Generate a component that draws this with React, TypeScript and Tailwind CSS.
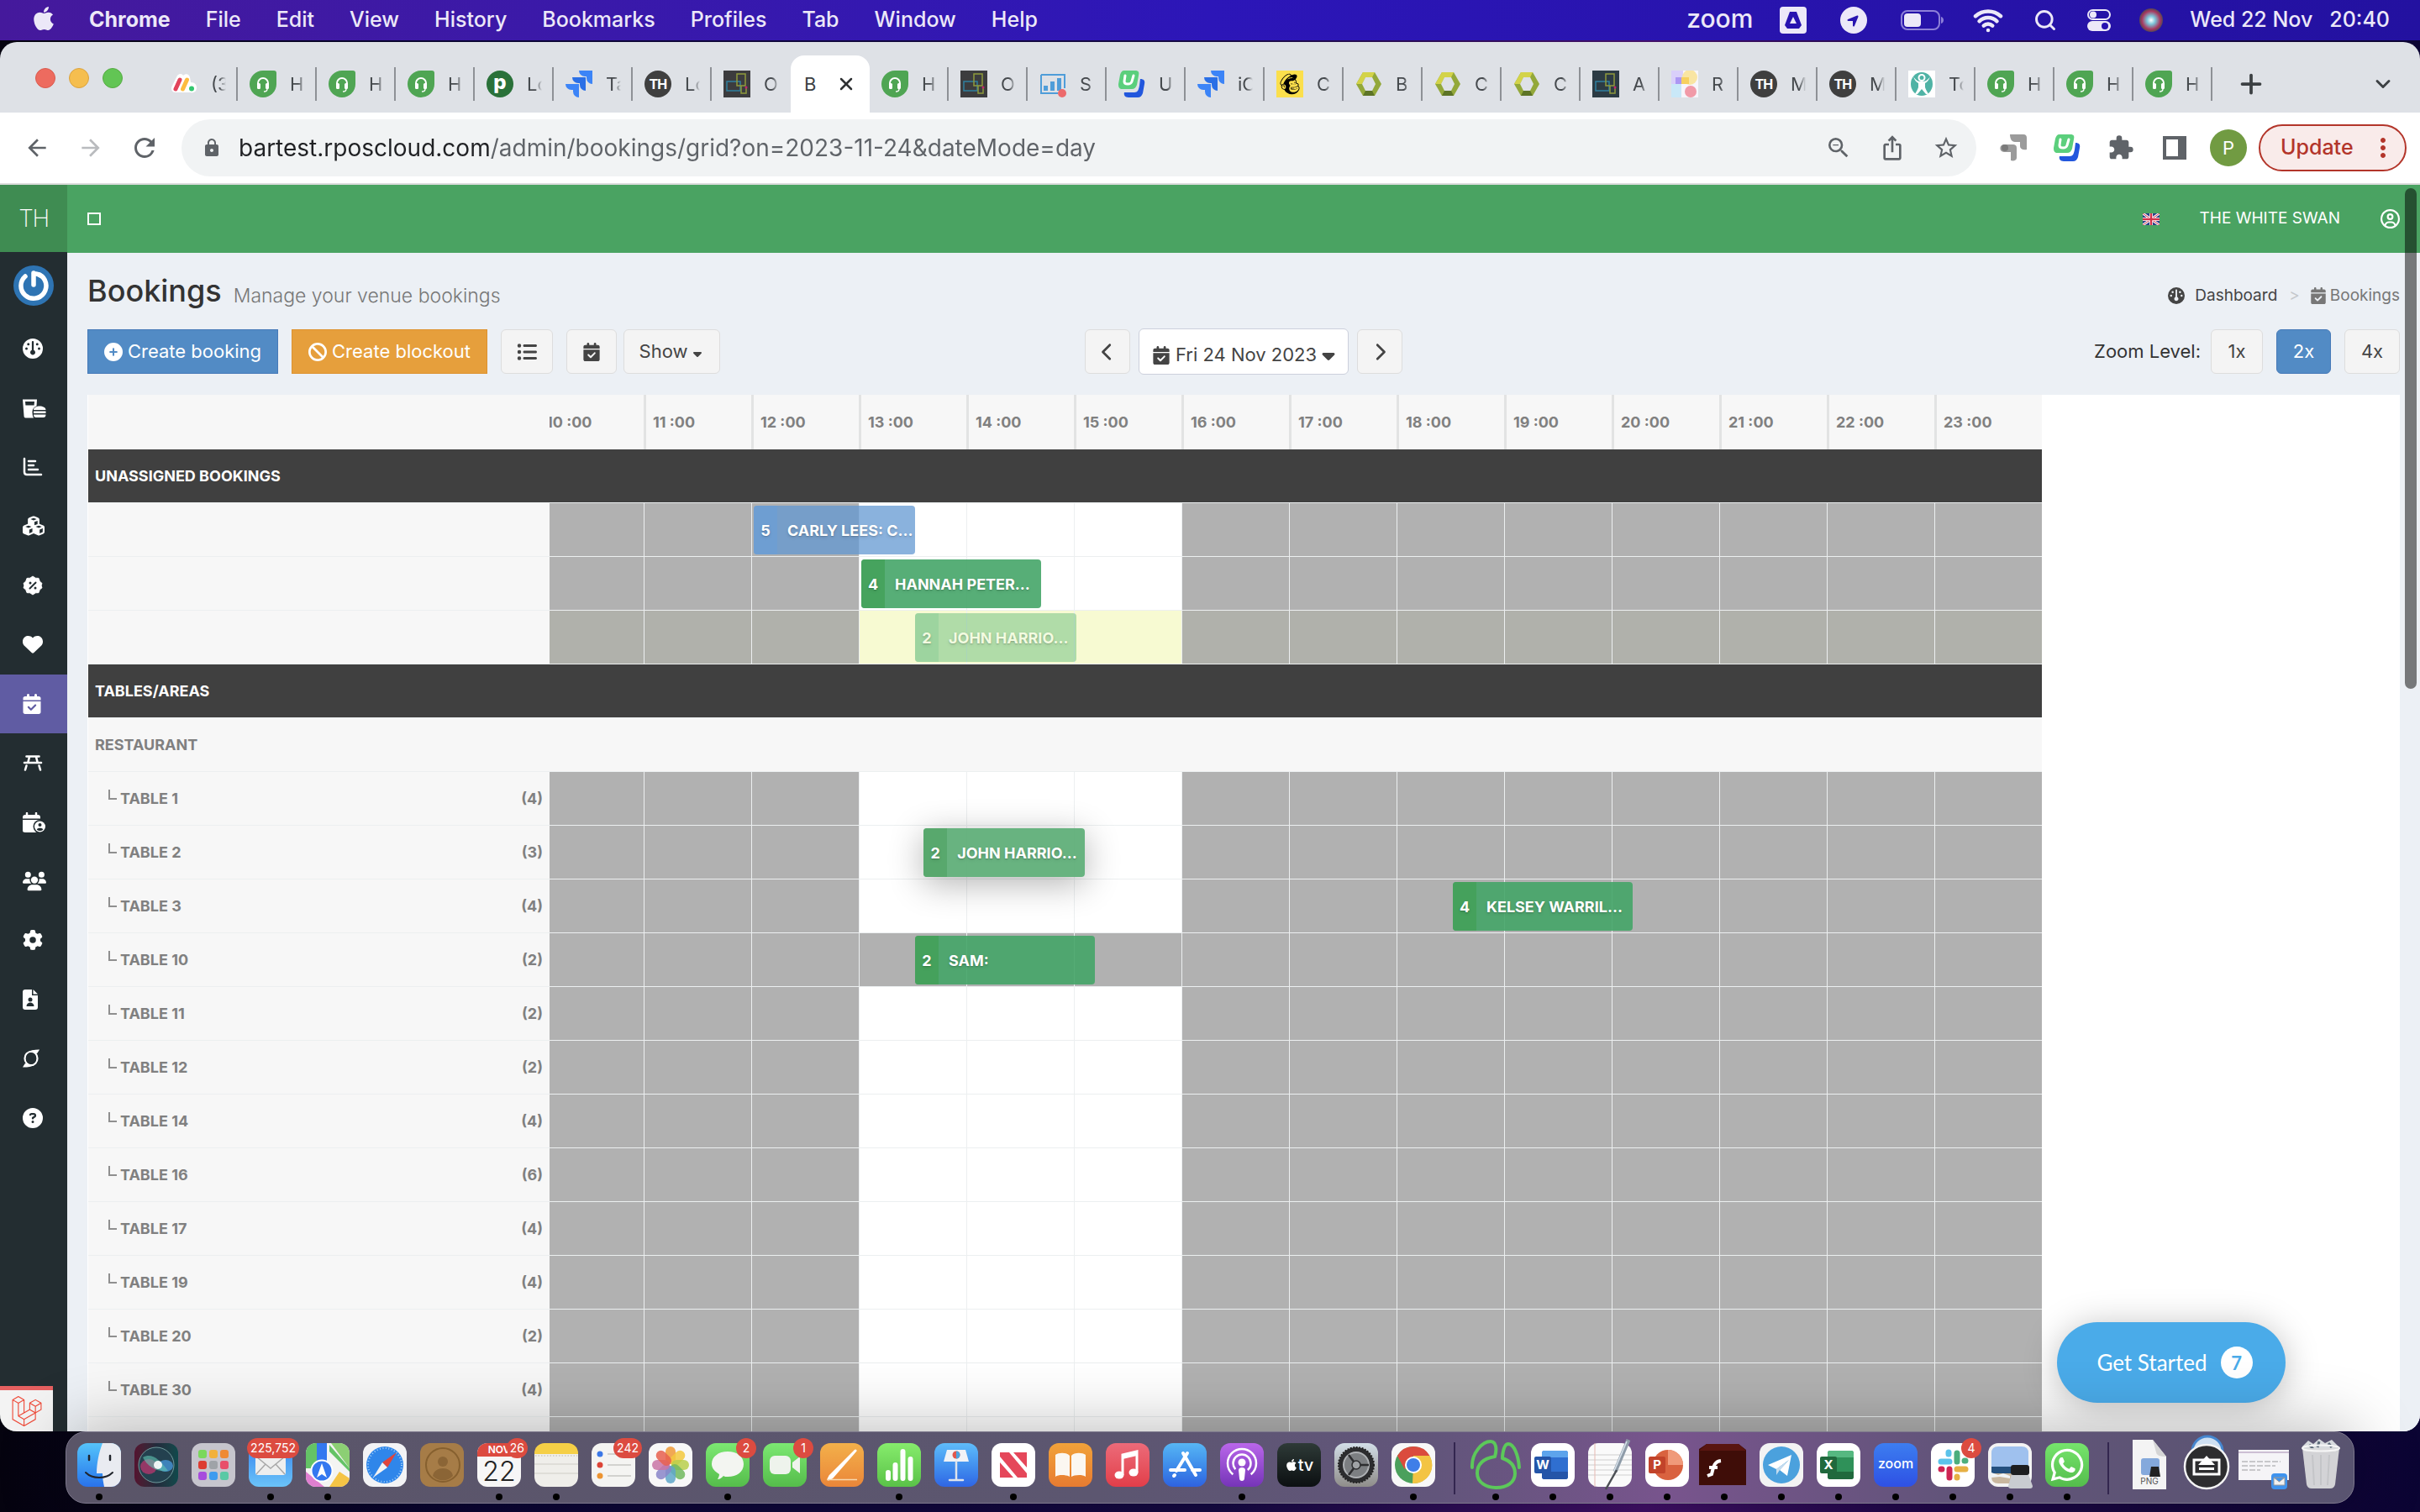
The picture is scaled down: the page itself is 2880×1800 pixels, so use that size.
import type { ReactNode } from 'react'
import {
  FaApple,
  FaBan,
  FaCalendarCheck,
  FaCaretDown,
  FaChevronLeft,
  FaChevronRight,
  FaCirclePlus,
  FaCircleQuestion,
  FaCubes,
  FaGauge,
  FaGear,
  FaHeart,
  FaLaravel,
  FaListUl,
  FaLocationArrow,
  FaMailchimp,
  FaRegCircleUser,
  FaUsers,
  FaWhatsapp,
} from 'react-icons/fa6'
import {
  MdArrowBack,
  MdArrowForward,
  MdExtension,
  MdIosShare,
  MdLock,
  MdMoreVert,
  MdRefresh,
  MdStarBorder,
  MdZoomOut,
} from 'react-icons/md'
import { ChevronDown, Plus, Search, Wifi, X } from 'lucide-react'

const HOUR_WIDTH = 128
const HOURS = [11, 12, 13, 14, 15, 16, 17, 18, 19, 20, 21, 22, 23]
const MENUS = ['File', 'Edit', 'View', 'History', 'Bookmarks', 'Profiles', 'Tab', 'Window', 'Help']

/* ---------- tab favicons ---------- */

function HelpdeskIcon() {
  return (
    <svg viewBox="0 0 32 32" className="size-8">
      <path d="M16 0h13a3 3 0 0 1 3 3v13A16 16 0 1 1 16 0z" fill="#4fa553" />
      <path d="M10 18v-3a6 6 0 0 1 12 0v3" fill="none" stroke="#fff" strokeWidth="2" />
      <rect x="9" y="15" width="4" height="7" rx="1.5" fill="#fff" />
      <rect x="19" y="15" width="4" height="7" rx="1.5" fill="#fff" />
      <path d="M21 22c0 2-2 3-4 3" fill="none" stroke="#fff" strokeWidth="1.4" />
    </svg>
  )
}

function MondayIcon() {
  return (
    <svg viewBox="0 0 32 32" className="size-8">
      <path d="M8 6c3-3 6-2 7 0 3-3 7-2 8 2l1 6c5 0 7 3 7 6 0 5-3 7-8 6H6c-5 0-6-5-4-8z" fill="#fff" />
      <path d="M6 22l5-11" stroke="#e2445c" strokeWidth="5" strokeLinecap="round" />
      <path d="M14.500 22l5-11" stroke="#fdbc3f" strokeWidth="5" strokeLinecap="round" />
      <circle cx="25" cy="21.500" r="3" fill="#33c76f" />
    </svg>
  )
}

function JiraIcon() {
  return (
    <svg viewBox="0 0 32 32" className="size-8">
      <path d="M16 0h16v16a7 7 0 0 1-7-7V7h-2a7 7 0 0 1-7-7z" fill="#3c84f7" />
      <path d="M8 8h16v16a7 7 0 0 1-7-7v-2h-2a7 7 0 0 1-7-7z" fill="#2a6fe6" />
      <path d="M0 16h16v16a7 7 0 0 1-7-7v-2H7a7 7 0 0 1-7-7z" fill="#3c84f7" />
    </svg>
  )
}

function CircuitIcon({ dark }: { dark?: boolean }) {
  return (
    <svg viewBox="0 0 32 32" className="size-8">
      <rect width="32" height="32" fill={dark ? '#2c3b44' : '#3c3c3e'} />
      <path d="M4 13h16v11H4z" fill="none" stroke="#2f7f9f" strokeWidth="1.500" />
      <path d="M16 4h10v14H16zM21 18v9h6v-8" fill="none" stroke="#8e9a3c" strokeWidth="1.500" />
      <circle cx="27" cy="20" r="1.500" fill="#c2266e" />
    </svg>
  )
}

function HexIcon() {
  return (
    <svg viewBox="0 0 32 32" className="size-8">
      <path d="M9 2h14l8 14-8 14H9L1 16z" fill="#93a83a" />
      <path d="M9 2h14l-3 6h-8L8 16H1z" fill="#d3d349" />
      <path d="M9 30h14l-3-6h-8z" fill="#5d7426" />
      <path d="M12 8h8l4 8-4 8h-8l-4-8z" fill="#dee1e6" />
    </svg>
  )
}

function ULogo() {
  return (
    <svg viewBox="0 0 32 32" className="size-8">
      <path d="M12 32c-4 0-6-3-5-6h12c4 0 5-3 6-8l1-8c4 0 6 2 5 6l-2 11c-1 3-3 5-6 5z" fill="#2257dd" />
      <path d="M7 0h13c4 0 5 2 4 6l-2 11c-1 3-3 5-6 5H5c-4 0-5-2-5-6L2 5c1-3 2-5 5-5z" fill="#5bcf7c" />
      <path d="M8 6l-1 7c0 4 8 4 9 0l2-7" fill="none" stroke="#fff" strokeWidth="3" strokeLinecap="round" />
    </svg>
  )
}

function ChartIcon() {
  return (
    <svg viewBox="0 0 32 32" className="size-8">
      <path d="M2 5h28v16M22 27H2V5" fill="none" stroke="#4f9dd9" strokeWidth="2" />
      <path d="M5 18h5v6H5zM13 13h5v11h-5zM21 9h5v15h-5z" fill="#4f9dd9" />
      <circle cx="27" cy="27" r="5" fill="#ec6a6c" />
    </svg>
  )
}

function PinkTiles() {
  return (
    <svg viewBox="0 0 32 32" className="size-8">
      <rect width="32" height="32" fill="#f7f5fb" />
      <path d="M0 0h14v16H0z" fill="#d9cffa" />
      <circle cx="22" cy="8" r="9" fill="#f9e5a3" />
      <path d="M5 8h9v8H5z" fill="#ac97f3" />
      <path d="M12 8h9v8h-9z" fill="#f6d05f" />
      <path d="M0 16h12v16H0z" fill="#c9e8f8" />
      <circle cx="23" cy="25" r="7" fill="#f19aa8" />
    </svg>
  )
}

function PersonIcon() {
  return (
    <svg viewBox="0 0 32 32" className="size-8">
      <rect width="32" height="32" fill="#fff" />
      <ellipse cx="16" cy="16" rx="13" ry="14" fill="#4fb3a5" />
      <circle cx="16" cy="8.500" r="3.500" fill="none" stroke="#fff" strokeWidth="2" />
      <path d="M6 7c1 4 4 7 6 8v5c-1 3-3 6-4 8h3l5-6 5 6h3c-1-2-3-5-4-8v-5c2-1 5-4 6-8-3 5-6 6-10 6S9 12 6 7z" fill="#fff" />
    </svg>
  )
}

function ThIcon() {
  return (
    <span className="flex size-8 items-center justify-center rounded-full bg-[#3f3f3f] text-[16px] font-bold tracking-tighter text-white">
      TH
    </span>
  )
}

function PIcon() {
  return (
    <span className="flex size-8 items-center justify-center rounded-full bg-[#2a7139] pb-1 text-[24px] leading-none font-extrabold text-white">
      p
    </span>
  )
}

function ChimpIcon() {
  return (
    <span className="flex size-8 items-center justify-center bg-[#fbdf4c]">
      <FaMailchimp className="size-7 text-black" />
    </span>
  )
}

type BrowserTab = { title: string; icon?: ReactNode; active?: boolean; last?: boolean }

const TABS: BrowserTab[] = [
  { title: '(3', icon: <MondayIcon /> },
  { title: 'H', icon: <HelpdeskIcon /> },
  { title: 'H', icon: <HelpdeskIcon /> },
  { title: 'H', icon: <HelpdeskIcon /> },
  { title: 'Lo', icon: <PIcon /> },
  { title: 'Ta', icon: <JiraIcon /> },
  { title: 'Lo', icon: <ThIcon /> },
  { title: 'O', icon: <CircuitIcon />, last: true },
  { title: 'B', active: true },
  { title: 'H', icon: <HelpdeskIcon /> },
  { title: 'O', icon: <CircuitIcon /> },
  { title: 'S', icon: <ChartIcon /> },
  { title: 'U', icon: <ULogo /> },
  { title: 'iC', icon: <JiraIcon /> },
  { title: 'C', icon: <ChimpIcon /> },
  { title: 'B', icon: <HexIcon /> },
  { title: 'C', icon: <HexIcon /> },
  { title: 'C', icon: <HexIcon /> },
  { title: 'A', icon: <CircuitIcon dark /> },
  { title: 'R', icon: <PinkTiles /> },
  { title: 'M', icon: <ThIcon /> },
  { title: 'M', icon: <ThIcon /> },
  { title: 'To', icon: <PersonIcon /> },
  { title: 'H', icon: <HelpdeskIcon /> },
  { title: 'H', icon: <HelpdeskIcon /> },
  { title: 'H', icon: <HelpdeskIcon /> },
]

/* ---------- system menu bar ---------- */

function MenuBar() {
  return (
    <div className="flex h-12 shrink-0 items-center bg-linear-to-r from-[#45199c] via-[#2c16b8] to-[#2311a0] px-9 text-[25px] text-[#ece8f8]">
      <FaApple className="mb-1 size-8" />
      <nav className="ml-[38px] flex items-center gap-[42px]">
        <button className="font-bold">Chrome</button>
        {MENUS.map((m) => (
          <button key={m} className="font-medium">
            {m}
          </button>
        ))}
      </nav>
      <div className="ml-auto flex items-center">
        <span className="mb-1 text-[30px] leading-none font-medium">zoom</span>
        <svg viewBox="0 0 32 32" className="ml-8 size-8">
          <rect width="32" height="32" rx="4" fill="#ece8f8" />
          <path d="M12 6h8l6 16-3 4H9l-3-4z" fill="#2813b0" />
          <path d="M16 12l4 8h-8z" fill="#ece8f8" />
        </svg>
        <span className="ml-10 flex size-8 items-center justify-center rounded-full bg-[#ece8f8]">
          <FaLocationArrow className="mt-0.5 mr-0.5 size-4 text-[#2813b0]" />
        </span>
        <svg viewBox="0 0 52 24" className="ml-10 h-6 w-[52px]">
          <rect x="1" y="1" width="45" height="22" rx="7" fill="none" stroke="#8d80d8" strokeWidth="2" />
          <rect x="4" y="4" width="20" height="16" rx="4" fill="#ece8f8" />
          <path d="M48 8c4 1 4 7 0 8z" fill="#8d80d8" />
        </svg>
        <Wifi className="ml-[34px] size-9" strokeWidth={3} />
        <Search className="ml-9 size-7" strokeWidth={2.5} />
        <svg viewBox="0 0 28 28" className="ml-9 size-7">
          <rect x="1" y="2" width="26" height="11" rx="5.500" fill="none" stroke="#ece8f8" strokeWidth="2" />
          <circle cx="7" cy="7.500" r="4" fill="#ece8f8" />
          <rect y="15" width="28" height="12" rx="6" fill="#ece8f8" />
          <circle cx="21" cy="21" r="4" fill="#2813b0" />
        </svg>
        <span className="ml-[34px] size-7 rounded-full bg-[radial-gradient(circle_at_50%_50%,#ffffff_0%,#7cc4d8_25%,#a8385f_55%,#22504f_80%)]" />
        <span className="ml-8 font-medium whitespace-pre">Wed 22 Nov   20:40</span>
      </div>
    </div>
  )
}

/* ---------- browser chrome ---------- */

function TabStrip() {
  return (
    <div className="flex h-[84px] shrink-0 items-end bg-[#dee1e6]">
      <div className="mb-[29px] ml-[42px] flex gap-4">
        <span className="size-6 rounded-full border border-[#d95a4e] bg-[#ed6b5f]" />
        <span className="size-6 rounded-full border border-[#dba23e] bg-[#f5be4f]" />
        <span className="size-6 rounded-full border border-[#56ab43] bg-[#62c554]" />
      </div>
      <div className="ml-[43px] flex items-end">
        {TABS.map((tab, i) =>
          tab.active ? (
            <div key={i} className="flex h-[68px] w-[94px] items-center gap-[18px] rounded-t-2xl bg-white pl-[16px] text-[22px] text-[#3c4043]">
              <span className="w-5">B</span>
              <button aria-label="Close tab">
                <X className="size-6 text-[#2f3133]" strokeWidth={2.5} />
              </button>
            </div>
          ) : (
            <button key={i} className="flex h-[68px] w-[94px] items-center text-[22px] text-[#45494d]">
              <span className="ml-3.5 shrink-0">{tab.icon}</span>
              <span className="ml-4 w-5 overflow-hidden text-left [mask-image:linear-gradient(to_right,black_50%,transparent_90%)]">{tab.title}</span>
              <span className={tab.last ? 'hidden' : 'ml-auto h-10 w-0.5 bg-[#8e9196]'} />
            </button>
          ),
        )}
      </div>
      <button aria-label="New tab" className="mb-4 ml-7">
        <Plus className="size-9 text-[#3c4043]" strokeWidth={2.5} />
      </button>
      <button aria-label="Search tabs" className="mr-[30px] mb-5 ml-auto">
        <ChevronDown className="size-7 text-[#3c4043]" strokeWidth={2.5} />
      </button>
    </div>
  )
}

function AddressBar() {
  return (
    <div className="flex h-[86px] shrink-0 items-center border-b-2 border-[#dcdcdc] bg-white pr-4 pl-7 text-[#5f6368]">
      <button aria-label="Back">
        <MdArrowBack className="size-8" />
      </button>
      <button aria-label="Forward" className="ml-8 text-[#b9bbbe]">
        <MdArrowForward className="size-8" />
      </button>
      <button aria-label="Reload" className="ml-[30px]">
        <MdRefresh className="size-9" />
      </button>
      <div className="ml-[26px] flex h-[68px] flex-1 items-center rounded-full bg-[#f1f3f4] px-5">
        <MdLock className="ml-1 size-6 shrink-0" />
        <input
          aria-label="Address"
          defaultValue="bartest.rposcloud.com/admin/bookings/grid?on=2023-11-24&dateMode=day"
          className="ml-5 min-w-0 flex-1 bg-[linear-gradient(90deg,#202124_298px,#5f6368_298px)] bg-clip-text text-[28px] text-transparent outline-none"
        />
        <div className="flex items-center gap-8">
          <MdZoomOut className="size-8" />
          <MdIosShare className="size-8" />
          <MdStarBorder className="size-8" />
        </div>
      </div>
      <div className="ml-7 flex items-center gap-8">
        <svg viewBox="0 0 32 32" className="size-8">
          <path d="M12 0h16c3 0 4 2 4 4v14c-5 1-8-1-8-4V9h-6c-4 0-6-4-6-9z" fill="#9b9b9b" />
          <path d="M4 12h12c2 0 4 1 4 4v12c0 3-4 4-7 3V21H5c-6 0-6-8-1-9z" fill="#9b9b9b" />
          <circle cx="6" cy="16" r="4" fill="#7b7b7b" />
        </svg>
        <ULogo />
        <MdExtension className="size-8" />
        <svg viewBox="0 0 28 28" className="mx-0.5 size-7">
          <path d="M0 0h28v28H0zM4 4v20h14V4z" fill="#5f6368" fillRule="evenodd" />
        </svg>
      </div>
      <span className="ml-[26px] flex size-11 items-center justify-center rounded-full bg-[#719b42] text-[22px] text-white">P</span>
      <button className="ml-3.5 flex h-14 w-44 items-center justify-between rounded-full border-2 border-[#b3352a] bg-[#f9ebea] pr-2 pl-6 text-[25px] font-medium text-[#b3352a]">
        Update
        <MdMoreVert className="size-9" />
      </button>
    </div>
  )
}

/* ---------- app sidebar ---------- */

function DrinksIcon() {
  return (
    <svg viewBox="0 0 28 24" className="h-6 w-7" fill="currentColor">
      <path d="M0 1.500h17l-.5 8c-3 1-5 3.500-5 6 0 3 0 5 1.500 8H3.500C2 23.500 1.500 22.500 1.500 21zM3 4l.4 4.500h10.200L14 4z" fillRule="evenodd" />
      <path d="M13 14c0-6 14.500-6 14.500 0zM13 15.500h14.500v2.500H13zM13 19.500h14.500c0 2.500-1 3.500-3 3.500h-8.500c-2 0-3-1-3-3.500z" />
    </svg>
  )
}

function ReportIcon() {
  return (
    <svg viewBox="0 0 24 24" className="size-6" fill="none" stroke="currentColor" strokeWidth="2.500" strokeLinecap="round">
      <path d="M2 2v16c0 2 1 3 3 3h17M7 5h8M7 10h6M7 15h11" />
    </svg>
  )
}

function OfferIcon() {
  return (
    <svg viewBox="0 0 24 24" className="size-6">
      <path
        d="M12 1l3.200 2.200 3.800.2 1.200 3.600L23 9.500 22 12l1 2.700-2.800 2.400-1.200 3.500-3.800.2L12 23l-3.200-2.200-3.800-.2-1.200-3.500L1 14.700 2 12 1 9.500l2.800-2.500L5 3.400l3.800-.2z"
        fill="currentColor"
        stroke="currentColor"
        strokeLinejoin="round"
      />
      <path d="M8.500 15.500l7-7" stroke="#232d31" strokeWidth="2" strokeLinecap="round" />
      <circle cx="9" cy="9" r="1.500" fill="#232d31" />
      <circle cx="15" cy="15" r="1.500" fill="#232d31" />
    </svg>
  )
}

function PicnicIcon() {
  return (
    <svg viewBox="0 0 24 24" className="size-6" fill="none" stroke="currentColor" strokeWidth="2.600" strokeLinecap="round">
      <path d="M4.500 4.500h15M2 12h20M8 5l-1.500 6M16 5l1.500 6M4.500 15.500L3 20.500M19.500 15.500l1.500 5" />
    </svg>
  )
}

function CalendarUserIcon() {
  return (
    <svg viewBox="0 0 28 24" className="h-6 w-7">
      <path d="M5 1v4M16 1v4" stroke="currentColor" strokeWidth="2.500" strokeLinecap="round" />
      <path d="M3 3h15c2 0 3 1 3 3v1.500H0V6c0-2 1-3 3-3zM0 9h21v13c0 1-1 2-3 2H3c-2 0-3-1-3-2z" fill="currentColor" />
      <circle cx="20.500" cy="17" r="8" fill="#232d31" />
      <circle cx="20.500" cy="17" r="6.500" fill="currentColor" />
      <circle cx="20.500" cy="15" r="2" fill="#232d31" />
      <path d="M16.800 20.500c.5-2.500 7-2.500 7.500 0-2 2-5.500 2-7.500 0z" fill="#232d31" />
    </svg>
  )
}

function FileUserIcon() {
  return (
    <svg viewBox="0 0 20 24" className="h-6 w-5">
      <path d="M3 0h8v7h7v14c0 2-1 3-3 3H3c-2 0-3-1-3-3V3c0-2 1-3 3-3zM12.500 0L18 5.500h-5.500z" fill="currentColor" />
      <circle cx="9" cy="12" r="2.500" fill="#232d31" />
      <path d="M4.500 20c0-6 9-6 9 0z" fill="#232d31" />
    </svg>
  )
}

function OrbitIcon() {
  return (
    <svg viewBox="0 0 22 24" className="h-6 w-[22px]" fill="none" stroke="currentColor">
      <ellipse cx="10" cy="12" rx="7.500" ry="8" strokeWidth="2.200" />
      <path d="M7 4.500C11 2 15 2 19 2l-2.500 4M13 19.500C9 22 5 22 1 22l2.500-4" strokeWidth="1.200" fill="currentColor" />
      <ellipse cx="10" cy="12" rx="6" ry="7" fill="#232d31" stroke="none" />
    </svg>
  )
}

const SIDEBAR: { label: string; icon: ReactNode; active?: boolean }[] = [
  { label: 'Dashboard', icon: <FaGauge className="size-6" /> },
  { label: 'Products', icon: <DrinksIcon /> },
  { label: 'Reports', icon: <ReportIcon /> },
  { label: 'Stock', icon: <FaCubes className="size-[26px]" /> },
  { label: 'Offers', icon: <OfferIcon /> },
  { label: 'Loyalty', icon: <FaHeart className="size-6" /> },
  { label: 'Bookings', icon: <FaCalendarCheck className="size-6" />, active: true },
  { label: 'Tables', icon: <PicnicIcon /> },
  { label: 'Rota', icon: <CalendarUserIcon /> },
  { label: 'Customers', icon: <FaUsers className="size-7" /> },
  { label: 'Settings', icon: <FaGear className="size-6" /> },
  { label: 'Documents', icon: <FileUserIcon /> },
  { label: 'Sync', icon: <OrbitIcon /> },
  { label: 'Help', icon: <FaCircleQuestion className="size-6" /> },
]

function Sidebar() {
  return (
    <aside className="flex w-20 shrink-0 flex-col bg-[#232d31] text-white">
      <a href="#home" className="flex h-20 shrink-0 items-center justify-center bg-[#3f8c52] text-[28px] font-extralight tracking-tighter">
        TH
      </a>
      <a href="#account" aria-label="Account" className="mx-auto mt-4 shrink-0">
        <svg viewBox="0 0 48 48" className="size-12">
          <circle cx="24" cy="24" r="24" fill="#2e74b3" />
          <path d="M14 13a15 15 0 1 0 17-2" fill="none" stroke="#fff" strokeWidth="5.500" strokeLinecap="round" />
          <path d="M24 9v14M24 10c3-1 5 0 8 2" fill="none" stroke="#fff" strokeWidth="5.500" strokeLinecap="round" />
        </svg>
      </a>
      <nav className="mt-4 grid h-[986px] shrink-0 auto-rows-fr">
        {SIDEBAR.map((item) => (
          <a
            key={item.label}
            href={`#${item.label.toLowerCase()}`}
            aria-label={item.label}
            className={item.active ? 'flex items-center bg-[#605ca3] pl-[26px]' : 'flex items-center pl-[27px]'}
          >
            {item.icon}
          </a>
        ))}
      </nav>
      <a href="#debug" aria-label="Debug bar" className="mt-auto flex h-[54px] w-[63px] items-center justify-center border-t-5 border-[#e66060] bg-[#f3f3f3]">
        <FaLaravel className="size-9 text-[#ef4b3a]" />
      </a>
    </aside>
  )
}

/* ---------- bookings page ---------- */

function UkFlag() {
  return (
    <svg viewBox="0 0 20 14" className="h-3.5 w-5">
      <rect width="20" height="14" fill="#2a3f87" />
      <path d="M0 0l20 14M20 0L0 14" stroke="#fff" strokeWidth="3" />
      <path d="M0 0l20 14M20 0L0 14" stroke="#d2304a" strokeWidth="1" />
      <path d="M10 0v14M0 7h20" stroke="#fff" strokeWidth="4" />
      <path d="M10 0v14M0 7h20" stroke="#d2304a" strokeWidth="2.500" />
    </svg>
  )
}

function TopBar() {
  return (
    <header className="flex h-[81px] shrink-0 items-center bg-[#4aa362] pr-6 pl-6 text-white">
      <button aria-label="Toggle menu" className="h-[15px] w-4 border-2 border-white" />
      <div className="ml-auto flex items-center">
        <UkFlag />
        <a href="#venue" className="ml-12 text-[19px]">
          THE WHITE SWAN
        </a>
        <FaRegCircleUser className="ml-12 size-[23px]" />
      </div>
    </header>
  )
}

const plainButton =
  'flex h-[53px] shrink-0 items-center justify-center rounded-md border border-[#dddddd] bg-[#f4f4f4] text-[22px] text-[#444444]'

function Toolbar() {
  return (
    <div className="grid grid-cols-[1fr_auto_1fr] items-center">
      <div className="flex items-center">
        <button className="flex h-[53px] w-[227px] items-center justify-center gap-1.5 border border-[#4679b8] bg-[#528bc5] text-[22px] text-white">
          <FaCirclePlus className="size-[22px]" />
          Create booking
        </button>
        <button className="ml-4 flex h-[53px] w-[233px] items-center justify-center gap-1.5 border border-[#dd922f] bg-[#e69f3c] text-[22px] text-white">
          <FaBan className="size-[22px]" />
          Create blockout
        </button>
        <button aria-label="List view" className={`${plainButton} ml-4 w-[62px]`}>
          <FaListUl className="size-6" />
        </button>
        <button aria-label="Calendar view" className={`${plainButton} ml-4 w-[60px]`}>
          <FaCalendarCheck className="size-[22px]" />
        </button>
        <button className={`${plainButton} ml-2 w-[115px] gap-1`}>
          Show
          <FaCaretDown className="mt-1 size-4" />
        </button>
      </div>
      <div className="flex items-center gap-2.5">
        <button aria-label="Previous day" className={`${plainButton} w-[54px]`}>
          <FaChevronLeft className="size-[22px]" />
        </button>
        <button className="flex h-[55px] w-[250px] items-center justify-center gap-1.5 rounded-md border border-[#ccd0dc] bg-white pt-2 pl-1 text-[22px] text-[#444444]">
          <FaCalendarCheck className="size-[22px] shrink-0" />
          <span className="whitespace-nowrap">Fri 24 Nov 2023</span>
          <FaCaretDown className="-ml-1 size-6 shrink-0" />
        </button>
        <button aria-label="Next day" className={`${plainButton} w-[54px]`}>
          <FaChevronRight className="size-[22px]" />
        </button>
      </div>
      <div className="flex items-center justify-end gap-4 text-[22px] text-[#333333]">
        <span className="-mr-1">Zoom Level:</span>
        <button className={`${plainButton} w-[62px]`}>1x</button>
        <button className="h-[53px] w-[65px] rounded-md border border-[#4679b8] bg-[#528bc5] text-[22px] text-white">2x</button>
        <button className={`${plainButton} w-[66px]`}>4x</button>
      </div>
    </div>
  )
}

type Booking = {
  guests: number
  name: string
  start: number
  length: number
  look: 'blue' | 'green' | 'ghost' | 'dragging'
}

type Row = { label?: string; seats?: number; booking?: Booking; highlight?: boolean; closed?: boolean }

const UNASSIGNED: Row[] = [
  { booking: { guests: 5, name: 'CARLY LEES: C...', start: 12, length: 1.5, look: 'blue' } },
  { booking: { guests: 4, name: 'HANNAH PETER...', start: 13, length: 1.67, look: 'green' } },
  { highlight: true, booking: { guests: 2, name: 'JOHN HARRIO...', start: 13.5, length: 1.5, look: 'ghost' } },
]

const TABLES: Row[] = [
  { label: 'TABLE 1', seats: 4 },
  { label: 'TABLE 2', seats: 3, booking: { guests: 2, name: 'JOHN HARRIO...', start: 13.58, length: 1.5, look: 'dragging' } },
  { label: 'TABLE 3', seats: 4, booking: { guests: 4, name: 'KELSEY WARRIL...', start: 18.5, length: 1.67, look: 'green' } },
  { label: 'TABLE 10', seats: 2, closed: true, booking: { guests: 2, name: 'SAM:', start: 13.5, length: 1.67, look: 'green' } },
  { label: 'TABLE 11', seats: 2 },
  { label: 'TABLE 12', seats: 2 },
  { label: 'TABLE 14', seats: 4 },
  { label: 'TABLE 16', seats: 6 },
  { label: 'TABLE 17', seats: 4 },
  { label: 'TABLE 19', seats: 4 },
  { label: 'TABLE 20', seats: 2 },
  { label: 'TABLE 30', seats: 4 },
  {},
]

const BAR_LOOK = {
  blue: 'bg-[#6398d2]/75',
  green: 'bg-[#45a568]/90',
  ghost: 'bg-[#45b068]/40',
  dragging: 'bg-[#5bad75]/92 shadow-[0_8px_40px_rgba(0,0,0,0.3)]',
}

const COUNT_LOOK = {
  blue: 'bg-[#699ed8]/60',
  green: 'bg-[#42a058]/80',
  ghost: 'bg-[#6fc58a]/30',
  dragging: 'bg-[#54a568]/80',
}

function BookingBar({ booking }: { booking: Booking }) {
  const offset = (booking.start % 1) * HOUR_WIDTH + 2
  const ghost = booking.look === 'ghost'
  return (
    <button
      className={`absolute top-[3px] z-10 flex h-[58px] items-center overflow-hidden rounded-sm text-[18px] font-bold whitespace-nowrap text-shadow-md ${ghost ? 'text-[#f2fbe0]' : 'text-white'} ${BAR_LOOK[booking.look]}`}
      style={{ left: offset, width: booking.length * HOUR_WIDTH }}
    >
      <span className={`flex h-full w-7 shrink-0 items-center justify-center ${COUNT_LOOK[booking.look]}`}>{booking.guests}</span>
      <span className="ml-3">{booking.name}</span>
    </button>
  )
}

function cellColor(hour: number, row: Row) {
  const open = hour >= 13 && hour < 16 && !row.closed
  if (row.highlight) return open ? 'bg-[#f7fad2]' : 'bg-[#b0b1ab]'
  return open ? 'bg-white' : 'bg-[#b1b1b1]'
}

function ScheduleRow({ row }: { row: Row }) {
  return (
    <tr className="h-16">
      <th scope="row" className="border-b border-[#eceff0] bg-[#f7f7f7] pr-2 pl-2 font-bold">
        {row.label && (
          <span className="flex items-center">
            <span className="mb-2.5 ml-4 h-3 w-2.5 border-b-2 border-l-2 border-[#8f8f8f]" />
            <span className="ml-1">{row.label}</span>
            <span className="ml-auto">({row.seats})</span>
          </span>
        )}
      </th>
      <td className={`border-b border-[#eceff0] ${cellColor(10, row)}`} />
      {HOURS.map((hour) => (
        <td key={hour} className={`relative border-b border-l border-[#eceff0] p-0 ${cellColor(hour, row)}`}>
          {row.booking && Math.floor(row.booking.start) === hour && <BookingBar booking={row.booking} />}
        </td>
      ))}
    </tr>
  )
}

function SectionRow({ title, dark }: { title: string; dark?: boolean }) {
  return (
    <tr className={dark ? 'h-16 bg-[#404040] text-white' : 'h-16 bg-[#f7f7f7]'}>
      <th scope="colgroup" colSpan={HOURS.length + 2} className="border-b border-[#eceff0] pl-2 font-bold">
        {title}
      </th>
    </tr>
  )
}

function Schedule() {
  return (
    <table className="w-[2325px] table-fixed border-separate border-spacing-0 text-left text-[18px] text-[#808080]">
      <colgroup>
        <col className="w-[549px]" />
        <col className="w-28" />
        {HOURS.map((hour) => (
          <col key={hour} className="w-32" />
        ))}
      </colgroup>
      <thead>
        <tr className="h-[65px] bg-[#f7f7f7]">
          <th aria-label="Table" />
          <th scope="col" className="overflow-hidden p-0 font-bold">
            <span className="-ml-1">10 :00</span>
          </th>
          {HOURS.map((hour) => (
            <th key={hour} scope="col" className="border-l-3 border-[#e2e3e3] p-0 pl-2 font-bold">
              {hour} :00
            </th>
          ))}
        </tr>
      </thead>
      <tbody>
        <SectionRow title="UNASSIGNED BOOKINGS" dark />
        {UNASSIGNED.map((row, i) => (
          <ScheduleRow key={i} row={row} />
        ))}
        <SectionRow title="TABLES/AREAS" dark />
        <SectionRow title="RESTAURANT" />
        {TABLES.map((row, i) => (
          <ScheduleRow key={i} row={row} />
        ))}
      </tbody>
    </table>
  )
}

function BookingsPage() {
  return (
    <div className="flex min-h-0 flex-1 bg-white">
      <Sidebar />
      <div className="flex min-w-0 flex-1 flex-col">
        <TopBar />
        <main className="flex min-h-0 flex-1 flex-col bg-[#ecf0f5] px-6">
          <div className="flex h-[90px] shrink-0 items-center">
            <h1 className="text-[36px] font-medium text-[#333333]">Bookings</h1>
            <p className="mt-3 ml-3.5 text-[23px] font-light text-[#777777]">Manage your venue bookings</p>
            <nav className="mt-3 ml-auto flex items-center text-[19px] text-[#444444]">
              <FaGauge className="size-5" />
              <a href="#dashboard" className="ml-3">
                Dashboard
              </a>
              <span className="ml-3.5 text-[#c5c8cc]">&gt;</span>
              <FaCalendarCheck className="ml-3 size-5 text-[#777777]" />
              <a href="#bookings" className="ml-1 text-[#777777]">
                Bookings
              </a>
            </nav>
          </div>
          <Toolbar />
          <div className="mt-6 min-h-0 flex-1 overflow-hidden bg-white pl-px">
            <Schedule />
          </div>
        </main>
      </div>
    </div>
  )
}

/* ---------- dock ---------- */

type DockApp = { name: string; art: ReactNode; running?: boolean; badge?: string }

function Tile({ className, children }: { className: string; children?: ReactNode }) {
  return <span className={`flex size-[52px] items-center justify-center overflow-hidden rounded-xl ${className}`}>{children}</span>
}

function Art({ children }: { children: ReactNode }) {
  return (
    <svg viewBox="0 0 52 52" className="size-[52px] overflow-visible">
      {children}
    </svg>
  )
}

function OfficeArt({ letter, dark, mid, light, round }: { letter: string; dark: string; mid: string; light: string; round?: boolean }) {
  return (
    <span className="relative">
      <Art>
        {round ? (
          <>
            <circle cx="27" cy="26" r="18" fill={mid} />
            <path d="M27 8a18 18 0 0 1 18 18H27z" fill={light} />
          </>
        ) : (
          <>
            <rect x="13" y="9" width="31" height="34" rx="3" fill={mid} />
            <path d="M13 17V12q0-3 3-3h25q3 0 3 3v5z" fill={light} />
            <path d="M13 34h31v6q0 3-3 3H16q-3 0-3-3z" fill={dark} />
          </>
        )}
        <rect x="4" y="16" width="20" height="20" rx="2" fill={dark} />
      </Art>
      <span className="absolute top-4 left-1 w-5 text-center text-[15px] leading-5 font-bold text-white">{letter}</span>
    </span>
  )
}

const PETALS = ['#f09a37', '#f3c93f', '#b8cf4c', '#71b85f', '#5fa7c9', '#8a86c9', '#c974a6', '#e8604f']
const PAD_COLORS = ['#7bd85c', '#f2b13c', '#ef8a33', '#dd3c32', '#9fa3a8', '#e8506a', '#a64bdd', '#3f9bef', '#59c9a5']

const APPS: DockApp[] = [
  {
    name: 'Finder',
    running: true,
    art: (
      <Tile className="bg-linear-to-b from-[#56c3fa] to-[#2a72ea]">
        <Art>
          <path d="M30 0h22v52H32c-1-5-2-10-2-16h-7c0-12 3-26 7-36z" fill="#e9ebf1" />
          <path d="M14 15v5M39 15v5" stroke="#20242c" strokeWidth="2.500" strokeLinecap="round" />
          <path d="M10 35c8 8 24 8 32 0" fill="none" stroke="#20242c" strokeWidth="2" strokeLinecap="round" />
        </Art>
      </Tile>
    ),
  },
  {
    name: 'Siri',
    art: (
      <Tile className="bg-linear-to-r from-[#54122f] via-[#222b3c] to-[#0e4a4c]">
        <Art>
          <circle cx="26" cy="26" r="21" fill="#24414f" stroke="#6f9a9c" />
          <ellipse cx="17" cy="28" rx="10" ry="9" fill="#b0366c" fillOpacity="0.800" />
          <ellipse cx="37" cy="27" rx="9" ry="7" fill="#4593d4" fillOpacity="0.800" />
          <path d="M10 17c10-6 20 2 30 16-12 2-24-4-30-16z" fill="#62c6b4" fillOpacity="0.600" />
          <circle cx="28" cy="26" r="5" fill="#fff" fillOpacity="0.900" />
        </Art>
      </Tile>
    ),
  },
  {
    name: 'Launchpad',
    art: (
      <Tile className="bg-[#c6c5cd]">
        <span className="grid grid-cols-3 gap-[3px]">
          {PAD_COLORS.map((c) => (
            <span key={c} className="size-2.5 rounded-[3px]" style={{ backgroundColor: c }} />
          ))}
        </span>
      </Tile>
    ),
  },
  {
    name: 'Mail',
    running: true,
    badge: '225,752',
    art: (
      <Tile className="bg-linear-to-b from-[#3a83ee] to-[#6bc3f8]">
        <Art>
          <rect x="8" y="15" width="36" height="23" rx="3" fill="#eeeeee" />
          <path d="M9 16l17 14 17-14M9 37l11-12M43 37L32 25" fill="none" stroke="#a8a8a8" strokeWidth="1.500" />
        </Art>
      </Tile>
    ),
  },
  {
    name: 'Maps',
    running: true,
    art: (
      <Tile className="bg-[#f4f4f2]">
        <Art>
          <path d="M0 0h14v30H0z" fill="#64c366" />
          <path d="M30 0h22v30z" fill="#8ccf74" />
          <path d="M28 10l24 24v-4L28 2z" fill="#64c366" />
          <path d="M0 34l22 18H0z" fill="#df7fd0" />
          <path d="M28 52h24V42L40 34z" fill="#f5c445" />
          <path d="M13 0h12v32H13z" fill="#3478f0" />
          <circle cx="19" cy="33" r="12.500" fill="#3478f0" stroke="#fff" strokeWidth="2" />
          <path d="M19 24l6 17-6-4-6 4z" fill="#fff" />
        </Art>
      </Tile>
    ),
  },
  {
    name: 'Safari',
    art: (
      <Tile className="bg-[#f3f3f5]">
        <Art>
          <circle cx="26" cy="26" r="22" fill="#2f86ea" />
          <circle cx="26" cy="26" r="20" fill="none" stroke="#a5d0f8" strokeWidth="2" strokeDasharray="1 2.500" />
          <path d="M40 11L23 23l6 6z" fill="#e0453c" />
          <path d="M12 41l11-18 6 6z" fill="#f3f3f3" />
        </Art>
      </Tile>
    ),
  },
  {
    name: 'Contacts',
    art: (
      <Tile className="bg-[#a67c47]">
        <Art>
          <circle cx="27" cy="26" r="20" fill="none" stroke="#86602f" strokeWidth="2" />
          <circle cx="27" cy="22" r="6" fill="#8b6536" />
          <path d="M15 39c2-12 22-12 24 0-6 7-18 7-24 0z" fill="#8b6536" />
        </Art>
      </Tile>
    ),
  },
  {
    name: 'Calendar',
    running: true,
    badge: '26',
    art: (
      <Tile className="flex-col bg-[#f7f6f6]">
        <span className="h-4 w-full bg-[#dc4a3f] text-center text-[12px] leading-4 font-semibold text-white">NOV</span>
        <span className="flex flex-1 items-center text-[32px] leading-none font-light text-[#222222]">22</span>
      </Tile>
    ),
  },
  {
    name: 'Notes',
    running: true,
    art: (
      <Tile className="bg-linear-to-b from-[#f5cf46] from-25% to-[#efeeea] to-25%">
        <Art>
          <path d="M1 15h50" stroke="#b9b7ad" strokeDasharray="1.500 2" />
          <path d="M0 25h52M0 36h52" stroke="#cfcdc6" />
        </Art>
      </Tile>
    ),
  },
  {
    name: 'Reminders',
    badge: '242',
    art: (
      <Tile className="bg-[#f4f4f2]">
        <Art>
          <path d="M19 13h28M19 26h28M19 39h28" stroke="#c6c6c4" strokeWidth="1.500" />
          <circle cx="10" cy="13" r="3.500" fill="#3b78e7" />
          <circle cx="10" cy="26" r="3.500" fill="#dc4437" />
          <circle cx="10" cy="39" r="3.500" fill="#ec9432" />
        </Art>
      </Tile>
    ),
  },
  {
    name: 'Photos',
    art: (
      <Tile className="bg-[#f8f8f8]">
        <Art>
          {PETALS.map((c, i) => (
            <rect key={c} x="20" y="4" width="12" height="21" rx="6" fill={c} fillOpacity="0.850" transform={`rotate(${i * 45} 26 26)`} />
          ))}
        </Art>
      </Tile>
    ),
  },
  {
    name: 'Messages',
    running: true,
    badge: '2',
    art: (
      <Tile className="bg-linear-to-b from-[#7ce872] to-[#55bd4b]">
        <Art>
          <path d="M26 10c11 0 19 6 19 15s-8 15-19 15c-2 0-4 0-5-1-2 2-4 4-7 4 1-2 2-4 2-6-5-3-9-7-9-12 0-9 8-15 19-15z" fill="#f3f5f1" />
        </Art>
      </Tile>
    ),
  },
  {
    name: 'FaceTime',
    badge: '1',
    art: (
      <Tile className="bg-linear-to-b from-[#7ce872] to-[#55bd4b]">
        <Art>
          <rect x="8" y="15" width="25" height="22" rx="6" fill="#eef3ec" />
          <path d="M35 23l9-7v20l-9-7z" fill="#eef3ec" />
        </Art>
      </Tile>
    ),
  },
  {
    name: 'Pages',
    art: (
      <Tile className="bg-linear-to-b from-[#f3b04a] to-[#ea8639]">
        <Art>
          <path d="M42 9L12 39l-2 4 4-2z" fill="#fff" stroke="#fff" strokeWidth="3" strokeLinejoin="round" />
          <path d="M8 43.500h36" stroke="#f8d9b0" strokeWidth="1.500" />
        </Art>
      </Tile>
    ),
  },
  {
    name: 'Numbers',
    running: true,
    art: (
      <Tile className="bg-linear-to-b from-[#86ec6c] to-[#5ac248]">
        <Art>
          <path d="M13 35v7M21.500 26v16M30.500 10v32M39.500 19v23" stroke="#fff" strokeWidth="6" strokeLinecap="round" />
        </Art>
      </Tile>
    ),
  },
  {
    name: 'Keynote',
    art: (
      <Tile className="bg-linear-to-b from-[#5fbcf9] to-[#3065e4]">
        <Art>
          <path d="M15 8h22l4 14H11z" fill="#f0f2f6" />
          <circle cx="26" cy="14" r="4.500" fill="#e1584d" />
          <path d="M26 9.500a4.500 4.500 0 0 1 0 9z" fill="#4aa5e0" />
          <path d="M26 22v22M18 44h16" stroke="#dfe4ec" strokeWidth="2.500" strokeLinecap="round" />
        </Art>
      </Tile>
    ),
  },
  {
    name: 'News',
    running: true,
    art: (
      <Tile className="bg-white">
        <Art>
          <path d="M10 11h11l21 25v5H31L10 16z" fill="#e5475a" />
          <path d="M26 11h16v18zM10 23l16 18H10z" fill="#e5475a" />
        </Art>
      </Tile>
    ),
  },
  {
    name: 'Books',
    art: (
      <Tile className="bg-linear-to-b from-[#f1a23a] to-[#e77b31]">
        <Art>
          <path d="M25 15c-3-4-13-4-17-1v26c4-3 14-2 17 0zM27 15c3-4 13-4 17-1v26c-4-3-14-2-17 0z" fill="#fbf7f1" />
        </Art>
      </Tile>
    ),
  },
  {
    name: 'Music',
    art: (
      <Tile className="bg-linear-to-b from-[#ec6a79] to-[#e23d49]">
        <Art>
          <path d="M20 38V14l17-4v25" fill="none" stroke="#fff" strokeWidth="3" />
          <path d="M20 14l17-4v5l-17 4z" fill="#fff" />
          <ellipse cx="16" cy="38" rx="5.500" ry="4.500" fill="#fff" />
          <ellipse cx="33" cy="35" rx="5.500" ry="4.500" fill="#fff" />
        </Art>
      </Tile>
    ),
  },
  {
    name: 'App Store',
    art: (
      <Tile className="bg-linear-to-b from-[#57b6f4] to-[#2f62e0]">
        <Art>
          <path d="M29 12L16 33M24 12l15 26M9 32h17M35 32h9M13 39l1-1" stroke="#fff" strokeWidth="4" strokeLinecap="round" />
        </Art>
      </Tile>
    ),
  },
  {
    name: 'Podcasts',
    running: true,
    art: (
      <Tile className="bg-linear-to-b from-[#ba66ea] to-[#7634b8]">
        <Art>
          <circle cx="26" cy="24" r="17" fill="none" stroke="#fff" strokeWidth="2.500" strokeDasharray="84 23" strokeDashoffset="-38" />
          <circle cx="26" cy="24" r="10.500" fill="none" stroke="#fff" strokeWidth="2.500" strokeDasharray="50 16" strokeDashoffset="-25" />
          <circle cx="26" cy="23" r="4.500" fill="#fff" />
          <path d="M22 32c0-4 8-4 8 0l-1 10c0 4-6 4-6 0z" fill="#fff" />
        </Art>
      </Tile>
    ),
  },
  {
    name: 'TV',
    art: (
      <Tile className="bg-linear-to-b from-[#2e3a37] to-[#0c1012]">
        <FaApple className="size-4 text-white" />
        <span className="text-[20px] leading-none font-medium text-white">tv</span>
      </Tile>
    ),
  },
  {
    name: 'System Settings',
    art: (
      <Tile className="bg-linear-to-b from-[#d3dfe8] to-[#8f8d8a]">
        <Art>
          <circle cx="26" cy="26" r="21" fill="#2c2d2f" stroke="#222" strokeWidth="2" strokeDasharray="2 1.500" />
          <circle cx="26" cy="26" r="15" fill="#7c7f82" stroke="#aeb1b4" strokeWidth="2" />
          <path d="M26 26L17 14M26 26h15M26 26l-9 12" stroke="#2c2d2f" strokeWidth="2.500" />
          <circle cx="26" cy="26" r="5" fill="#9fa2a5" stroke="#2c2d2f" strokeWidth="1.500" />
        </Art>
      </Tile>
    ),
  },
  {
    name: 'Chrome',
    running: true,
    art: (
      <Tile className="bg-[#f8f8f8]">
        <Art>
          <circle cx="26" cy="26" r="22" fill="#4ba05c" />
          <path d="M26 26V15h19.500A22 22 0 0 1 25 48z" fill="#f3c443" />
          <path d="M26 4a22 22 0 0 1 19.500 11H26L15.500 31 7 15A22 22 0 0 1 26 4z" fill="#db4b3d" />
          <circle cx="26" cy="26" r="10" fill="#fff" />
          <circle cx="26" cy="26" r="8" fill="#3f7ee8" />
        </Art>
      </Tile>
    ),
  },
]

const EXTRA_APPS: DockApp[] = [
  {
    name: 'Navicat',
    running: true,
    art: (
      <Art>
        <path
          d="M-2 29C-3 12 10-2 20-2c6 0 8 8 5 18M34 16C35 6 37 1 41 1c7 0 12 14 13 28M34 18c9 3 15 9 15 18 0 11-10 17-22 17S4 47 4 36c0-12 9-18 21-20"
          fill="none"
          stroke="#5cc85a"
          strokeWidth="4"
          strokeLinecap="round"
        />
      </Art>
    ),
  },
  {
    name: 'Word',
    running: true,
    art: (
      <Tile className="bg-white">
        <OfficeArt letter="W" dark="#2455a8" mid="#2f6fd0" light="#5da4ec" />
      </Tile>
    ),
  },
  {
    name: 'TextEdit',
    running: true,
    art: (
      <Art>
        <rect width="52" height="52" rx="12" fill="#fafafa" />
        <path d="M0 14h52M0 20h52M0 26h52M0 32h52M0 38h52" stroke="#cfcfcf" />
        <path d="M8 0v52" stroke="#e6b9b2" />
        <path d="M48-4L32 34" stroke="#8e9ba8" strokeWidth="5" />
        <path d="M46-2L31 33" stroke="#d9e3ec" strokeWidth="1.500" />
        <path d="M34 32L21 55" stroke="#4c4f54" strokeWidth="2.500" />
      </Art>
    ),
  },
  {
    name: 'PowerPoint',
    running: true,
    art: (
      <Tile className="bg-white">
        <OfficeArt letter="P" dark="#c2432a" mid="#d9623f" light="#f09a7a" round />
      </Tile>
    ),
  },
  {
    name: 'Flash Player',
    running: true,
    art: (
      <Art>
        <path d="M-4 7L5 1h38l9 7v42H-4z" fill="#3f0d08" />
        <path d="M-4 9L5 1h38l9 8z" fill="#591510" />
        <path d="M22 21c-9 1-9 9-11 16l-5 2M8 29h10" fill="none" stroke="#fff" strokeWidth="4" />
      </Art>
    ),
  },
  {
    name: 'Telegram',
    running: true,
    art: (
      <Tile className="bg-[#f3f3f3]">
        <Art>
          <circle cx="26" cy="26" r="22" fill="#4ba1dd" />
          <path d="M10 26l28-12-5 25-9-7 11-12-15 11z" fill="#fff" />
          <path d="M20 31l15-11-11 12-4 6z" fill="#c5dcee" />
        </Art>
      </Tile>
    ),
  },
  {
    name: 'Excel',
    running: true,
    art: (
      <Tile className="bg-white">
        <OfficeArt letter="X" dark="#20693d" mid="#2f9159" light="#56b881" />
      </Tile>
    ),
  },
  {
    name: 'Zoom',
    running: true,
    art: <Tile className="bg-linear-to-b from-[#3d7df0] to-[#2f50e4] pb-1 text-[16px] font-medium text-white">zoom</Tile>,
  },
  {
    name: 'Slack',
    running: true,
    badge: '4',
    art: (
      <Tile className="bg-white">
        <Art>
          <path d="M12 22h10M21 11v2" stroke="#5cc3ea" strokeWidth="7" strokeLinecap="round" />
          <path d="M31 12v10M41 21h-1" stroke="#4cae7d" strokeWidth="7" strokeLinecap="round" />
          <path d="M31 31h10M31 40v1" stroke="#e6b044" strokeWidth="7" strokeLinecap="round" />
          <path d="M22 31v10M12 31h1" stroke="#ce2553" strokeWidth="7" strokeLinecap="round" />
        </Art>
      </Tile>
    ),
  },
  {
    name: 'Preview',
    running: true,
    art: (
      <Art>
        <rect width="52" height="52" rx="12" fill="#f3f3f3" />
        <path d="M4 12q0-8 8-8h28q8 0 8 8v18H4z" fill="#9fc1ee" />
        <path d="M4 28h44v8H4z" fill="#24507f" />
        <path d="M4 36h44v4q0 8-8 8H12q-8 0-8-8z" fill="#c9b79f" />
        <path d="M4 35l8 3 6-2 8 3v3l-12-2-10 1z" fill="#f1f4f7" />
        <path d="M28 37h20l5 14q0 3-3 3H27q-3 0-3-3z" fill="#c9ccd1" />
        <rect x="27" y="26" width="22" height="12" rx="3" fill="#1d1e20" />
      </Art>
    ),
  },
  {
    name: 'WhatsApp',
    running: true,
    art: (
      <Tile className="bg-linear-to-b from-[#76e46c] to-[#54bd4c]">
        <FaWhatsapp className="size-11 text-white" />
      </Tile>
    ),
  },
]

const SHELF: DockApp[] = [
  {
    name: 'Screenshot',
    art: (
      <span className="relative block">
        <Art>
          <path d="M6-4h24L46 16v39H6z" fill="#f4f4f4" />
          <path d="M30-4L46 16q-12 0-12-5z" fill="#d5d5d5" />
          <rect x="16" y="18" width="22" height="20" rx="3" fill="#84a9dc" />
          <path d="M28 28h9l2 12H26z" fill="#222" />
        </Art>
        <span className="absolute inset-x-0 bottom-0.5 text-center text-[10px] leading-none text-[#555555]">PNG</span>
      </span>
    ),
  },
  {
    name: 'Downloads',
    art: (
      <Art>
        <circle cx="27" cy="10" r="18" fill="#cfe0f2" stroke="#4586cf" strokeWidth="3" />
        <circle cx="26" cy="28" r="26" fill="#2d2d2f" stroke="#f4f4f4" strokeWidth="2.500" />
        <path d="M11 20h30v17H11z" fill="none" stroke="#fff" strokeWidth="3" />
        <path d="M26 15l10 11H16zM17 29h18v3H17z" fill="#fff" />
      </Art>
    ),
  },
  {
    name: 'Minimised window',
    art: (
      <Art>
        <rect x="-4" y="8" width="60" height="36" fill="#f5f4f7" />
        <path d="M-4 11h60" stroke="#cdbfd4" strokeWidth="2" />
        <path d="M0 22h46M0 27h40M0 32h22" stroke="#b9b9bd" strokeWidth="1.500" strokeDasharray="7 2" />
        <rect x="35" y="36" width="19" height="19" rx="4" fill="#3f93ee" />
        <path d="M38 41h13v9H38zM38 41l6.500 5 6.500-5" fill="#f1f1f1" stroke="#9a9a9a" />
      </Art>
    ),
  },
  {
    name: 'Trash',
    art: (
      <Art>
        <path d="M4 4l7-7 6 4 7-6 7 5 8-4 8 8-3 6H6z" fill="#d7dade" />
        <path d="M12 2l5 5M24-2l-2 7M35 0l4 5" stroke="#5d6b7a" strokeWidth="3" />
        <path d="M4 6h44l-5 43q-1 5-6 5H15q-5 0-6-5z" fill="#dadadb" fillOpacity="0.950" />
        <ellipse cx="26" cy="6" rx="22" ry="3.500" fill="none" stroke="#f6f6f6" strokeWidth="2" />
        <path d="M16 14l2 36M26 14v36M36 14l-2 36" stroke="#c4c5c8" strokeWidth="2" />
      </Art>
    ),
  },
]

function DockItem({ app }: { app: DockApp }) {
  return (
    <button aria-label={app.name} className="flex w-[68px] flex-col items-center pt-[13px]">
      <span className="relative">
        {app.art}
        {app.badge && (
          <span className="absolute -top-1.5 -right-2 flex h-6 min-w-6 items-center justify-center rounded-full bg-[#dc4b40] px-1 text-[14px] leading-none text-white">
            {app.badge}
          </span>
        )}
      </span>
      {app.running && <span className="mt-2 size-2 rounded-full bg-black" />}
    </button>
  )
}

function Divider() {
  return <span className="mx-3.5 mt-3 h-[62px] w-0.5 bg-[#33264f]" />
}

function Dock() {
  return (
    <div className="relative mx-auto mb-2.5 flex h-[86px] shrink-0 rounded-[24px] border border-[#7d788c] bg-[linear-gradient(90deg,#5a5568_0%,#5c5670_45%,#62557b_60%,#78548d_70%,#62547a_82%,#595470_100%)] px-[5px] shadow-[0_0_80px_rgba(0,0,0,0.3)]">
      {APPS.map((app) => (
        <DockItem key={app.name} app={app} />
      ))}
      <Divider />
      {EXTRA_APPS.map((app) => (
        <DockItem key={app.name} app={app} />
      ))}
      <Divider />
      {SHELF.map((app) => (
        <DockItem key={app.name} app={app} />
      ))}
    </div>
  )
}

export default function App() {
  return (
    <div className="flex h-screen w-full flex-col overflow-hidden bg-[linear-gradient(90deg,#05030f_0%,#0b0535_20%,#160a45_50%,#43116a_68%,#24094f_78%,#0b0433_100%)] font-[Inter,'Liberation_Sans',sans-serif]">
      <MenuBar />
      <div className="relative mt-0.5 flex min-h-0 flex-1 flex-col overflow-hidden rounded-[20px]">
        <TabStrip />
        <AddressBar />
        <BookingsPage />
        {/* page scrollbar */}
        <span className="absolute top-[174px] right-1 h-[596px] w-3.5 rounded-full bg-black/50" />
        <button className="absolute right-40 bottom-[34px] flex h-24 w-[272px] items-center justify-center gap-4 rounded-full bg-[#4aabe9] pl-2 font-[Lato,sans-serif] text-[26px] text-white shadow-[0_4px_40px_rgba(0,0,0,0.25)]">
          Get Started
          <span className="flex size-[38px] items-center justify-center rounded-full bg-white text-[22px] font-bold text-[#4aabe9]">7</span>
        </button>
      </div>
      <Dock />
    </div>
  )
}
